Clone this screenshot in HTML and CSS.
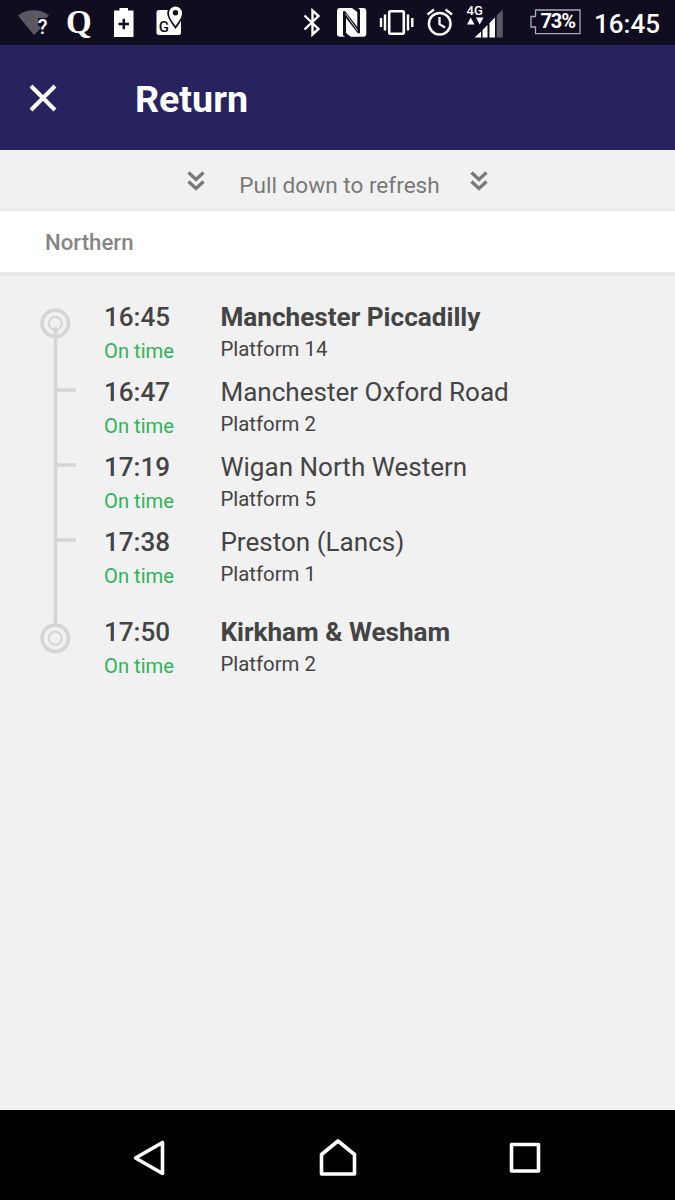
FILE: index.html
```html
<!DOCTYPE html>
<html lang="en">
  <head>
    <meta charset="UTF-8" />
    <meta name="viewport" content="width=device-width, initial-scale=1.0" />
    <title>Return</title>
    <link rel="stylesheet" href="styles.css">
  </head>
  <body>
    <div class="status-bar">
      <div class="notifications">
        <!-- wifi -->
        <svg width="32" height="45" viewBox="18 0 32 45">
          <path d="M18 15.5C26 8.500 41 8.500 49 15.500L46 18H38V25L41 28L34 35Z" fill="#5a5863" />
          <text class="wifi-mark" x="37.800" y="33.500">?</text>
        </svg>
        <span class="quora">Q</span>
        <!-- battery saver -->
        <svg width="20" height="45" viewBox="114 0 20 45">
          <path d="M114 10.500H119.500V8H128V10.500H133.500V37H114Z" fill="#fff" />
          <path d="M118.500 24H129M123.750 18.700V29.300" stroke="#100d20" stroke-width="2.400" />
        </svg>
        <!-- maps -->
        <svg width="28" height="45" viewBox="156 0 28 45">
          <rect x="156.500" y="10" width="24.500" height="25" rx="2.500" fill="#fff" />
          <path d="M175.500 26C171.500 20.500 169 17 169 13A6.500 6.500 0 0 1 182 13C182 17 179.500 20.500 175.500 26Z" fill="#fff" stroke="#100d20" stroke-width="3.600" />
          <path d="M175.500 26C171.500 20.500 169 17 169 13A6.500 6.500 0 0 1 182 13C182 17 179.500 20.500 175.500 26Z" fill="#fff" />
          <circle cx="175.500" cy="12.800" r="2.700" fill="#100d20" />
          <text class="map-g" x="158.800" y="31.800">G</text>
        </svg>
      </div>

      <div class="system">
        <!-- bluetooth -->
        <svg width="20" height="45" viewBox="302 0 20 45">
          <path d="M304.500 15.500L318.500 29L312.500 34.500V10.500L318.500 16L304.500 29.500" fill="none" stroke="#fff" stroke-width="2.400" />
        </svg>
        <!-- nfc -->
        <svg class="nfc" width="30" height="45" viewBox="337 0 30 45">
          <rect x="337" y="8" width="29.300" height="28.800" rx="3" fill="#fff" />
          <path d="M343 11.500L345 11L357.300 27V12L352 8H357C359 8 360 9 360 11V33L358 33.500L346 18V33L351 37H346C344 37 343 36 343 34Z" fill="#100d20" />
          <path d="M345.500 13.500L357.500 30.500" stroke="#fff" stroke-width="0.800" />
        </svg>
        <!-- vibrate -->
        <svg class="vibrate" width="36" height="45" viewBox="379 0 36 45">
          <rect x="389.200" y="11.200" width="14.600" height="22.600" rx="1.500" fill="none" stroke="#fff" stroke-width="2.600" />
          <path d="M385 14.500V30.500M381 18V27M408 14.500V30.500M412.300 18V27" stroke="#fff" stroke-width="2.400" />
        </svg>
        <!-- alarm -->
        <svg class="alarm" width="28" height="45" viewBox="426 0 28 45">
          <circle cx="439.700" cy="23.700" r="10.800" fill="none" stroke="#fff" stroke-width="2.500" />
          <path d="M439.500 17V24.200L445 27.500M427.500 14.500L434 9.500M445.500 9.500L452 14.500" fill="none" stroke="#fff" stroke-width="2.300" />
        </svg>
        <!-- 4G signal -->
        <svg class="signal" width="37" height="45" viewBox="466 0 37 45">
          <text class="network" x="466.500" y="15">4G</text>
          <path d="M467 24.500L470.700 17.500L474.500 24.500ZM476 17.500H483.500L479.700 24.500ZM474.500 37.500L481 31.500V37.500ZM482.500 30L487.500 25V37.500H482.500ZM489.500 23L495 17.500V37.500H489.500Z" fill="#fff" />
          <path d="M496.700 15.500L502.800 9.500V37.500H496.700Z" fill="#5a5863" />
        </svg>
        <!-- battery -->
        <svg class="battery" width="51" height="45" viewBox="530 0 51 45">
          <path d="M535.500 10H580V33.700H535.500V27H531V16.500H535.500Z" fill="none" stroke="#aaa9b3" stroke-width="1.300" />
          <text class="percent" x="540.500" y="28.400">73%</text>
        </svg>
        <span class="clock">16:45</span>
      </div>
    </div>

    <header class="app-bar">
      <svg width="28" height="28" viewBox="0 0 28 28">
        <path d="M2 2L26 26M26 2L2 26" stroke="#fff" stroke-width="4" />
      </svg>
      <h1>Return</h1>
    </header>

    <div class="refresh">
      <svg width="18" height="20" viewBox="0 0 18 20">
        <path d="M1.500 1.500L9 8.500L16.500 1.500M1.500 10.500L9 17.500L16.500 10.500" />
      </svg>
      <span>Pull down to refresh</span>
      <svg width="18" height="20" viewBox="0 0 18 20">
        <path d="M1.500 1.500L9 8.500L16.500 1.500M1.500 10.500L9 17.500L16.500 10.500" />
      </svg>
    </div>

    <div class="operator">Northern</div>

    <main class="journey">
      <!-- line with the stops -->
      <svg class="track" width="37" height="346" viewBox="0 0 37 346">
        <path d="M15.500 19V317M15.500 82H36M15.500 157H36M15.500 232H36" stroke-width="3.500" />
        <circle cx="15.300" cy="15.300" r="13.200" stroke-width="3.600" />
        <circle cx="15.300" cy="15.300" r="6.500" stroke-width="2" />
        <circle cx="15.300" cy="330.300" r="13.200" stroke-width="3.600" />
        <circle cx="15.300" cy="330.300" r="6.500" stroke-width="2" />
      </svg>

      <ul class="stops">
        <li class="stop main">
          <div class="times">
            <p class="time">16:45</p>
            <p class="status">On time</p>
          </div>
          <div>
            <p class="station">Manchester Piccadilly</p>
            <p class="platform">Platform 14</p>
          </div>
        </li>
        <li class="stop">
          <div class="times">
            <p class="time">16:47</p>
            <p class="status">On time</p>
          </div>
          <div>
            <p class="station">Manchester Oxford Road</p>
            <p class="platform">Platform 2</p>
          </div>
        </li>
        <li class="stop">
          <div class="times">
            <p class="time">17:19</p>
            <p class="status">On time</p>
          </div>
          <div>
            <p class="station">Wigan North Western</p>
            <p class="platform">Platform 5</p>
          </div>
        </li>
        <li class="stop">
          <div class="times">
            <p class="time">17:38</p>
            <p class="status">On time</p>
          </div>
          <div>
            <p class="station">Preston (Lancs)</p>
            <p class="platform">Platform 1</p>
          </div>
        </li>
        <li class="stop main last">
          <div class="times">
            <p class="time">17:50</p>
            <p class="status">On time</p>
          </div>
          <div>
            <p class="station">Kirkham &amp; Wesham</p>
            <p class="platform">Platform 2</p>
          </div>
        </li>
      </ul>
    </main>

    <nav class="nav-bar">
      <svg width="34" height="38" viewBox="0 0 34 38">
        <path d="M2.500 19L29.500 3.500V34.500Z" />
      </svg>
      <svg width="38" height="38" viewBox="0 0 38 38">
        <path d="M2.500 35V15.500L19 2L35.500 15.500V35Z" />
      </svg>
      <svg width="32" height="38" viewBox="0 0 32 38">
        <path d="M2.500 5.500H29.500V32H2.500Z" />
      </svg>
    </nav>
  </body>
</html>
```
FILE: styles.css
```css
* {
  margin: 0;
  padding: 0;
  box-sizing: border-box;
  font-family: Roboto, sans-serif;
}

body {
  background-color: #f1f1f1;
  height: 1200px;
  display: flex;
  flex-direction: column;
}

svg {
  display: block;
  flex-shrink: 0;
}

/* Status bar */
.status-bar {
  height: 45px;
  padding: 0 15px 0 18px;
  background-color: #100d20;
  color: #fff;
  display: flex;
  justify-content: space-between;
}

.notifications,
.system {
  display: flex;
}

.notifications {
  gap: 22px;
}

.wifi-mark {
  font-size: 20px;
  font-weight: 500;
  fill: #fff;
}

.quora {
  width: 26px;
  margin-left: -6px;
  font-family: "Liberation Serif", serif;
  font-size: 33px;
  font-weight: bold;
  line-height: 44px;
}

.map-g {
  font-size: 15px;
  font-weight: 500;
  fill: #100d20;
}

.nfc {
  margin-left: 15px;
}

.vibrate {
  margin-left: 12px;
}

.alarm {
  margin-left: 11px;
}

.signal {
  margin-left: 12px;
}

.network {
  font-size: 13px;
  font-weight: 500;
  fill: #fff;
}

.battery {
  margin-left: 27px;
}

.percent {
  font-size: 20px;
  font-weight: bold;
  letter-spacing: -1.1px;
  fill: #fff;
}

.clock {
  width: 66px;
  margin-left: 13px;
  font-size: 26px;
  font-weight: 500;
  line-height: 48px;
}

/* Header */
.app-bar {
  height: 105px;
  padding: 2px 29px 0;
  background-color: #28235e;
  color: #fff;
  display: flex;
  align-items: center;
  gap: 78px;
}

.app-bar h1 {
  font-size: 37.6px;
  font-weight: bold;
}

.app-bar svg {
  margin-top: -1px;
}

/* Pull down to refresh */
.refresh {
  height: 61px;
  padding-top: 21px;
  border-bottom: 2px solid #ebebeb;
  display: flex;
  justify-content: center;
  gap: 30px;
  color: #797979;
  font-size: 22.6px;
  line-height: 30px;
}

.refresh span {
  padding-left: 4px;
}

.refresh svg {
  fill: none;
  stroke: #797979;
  stroke-width: 3.4;
}

.operator {
  height: 65px;
  padding-left: 45px;
  background-color: #fff;
  border-bottom: 4px solid #e9e9e9;
  color: #858585;
  font-size: 22.2px;
  font-weight: 500;
  line-height: 63px;
}

/* Journey */
.journey {
  flex: 1;
  padding: 26px 0 0 40px;
  display: flex;
  gap: 27px;
}

.track {
  margin-top: 6px;
  fill: none;
  stroke: #d5d5d5;
}

.stops {
  list-style: none;
}

.stop {
  height: 75px;
  display: flex;
  color: #444;
}

.times {
  width: 116.4px;
}

.time,
.station {
  font-size: 26.05px;
  line-height: 31px;
}

.time {
  font-weight: 500;
}

.status {
  margin-top: 5px;
  font-size: 20.2px;
  line-height: 26px;
  color: #2fb457;
}

.platform {
  margin-top: 3px;
  font-size: 20.4px;
  line-height: 26px;
}

.main .station {
  font-size: 26.15px;
  font-weight: bold;
}

.last {
  margin-top: 15px;
}

/* Android buttons */
.nav-bar {
  height: 90px;
  padding: 5px 134px 0 133px;
  background-color: #000;
  display: flex;
  justify-content: space-between;
  align-items: center;
}

.nav-bar svg {
  fill: none;
  stroke: #fff;
  stroke-width: 3.6;
  stroke-linejoin: round;
}
```
